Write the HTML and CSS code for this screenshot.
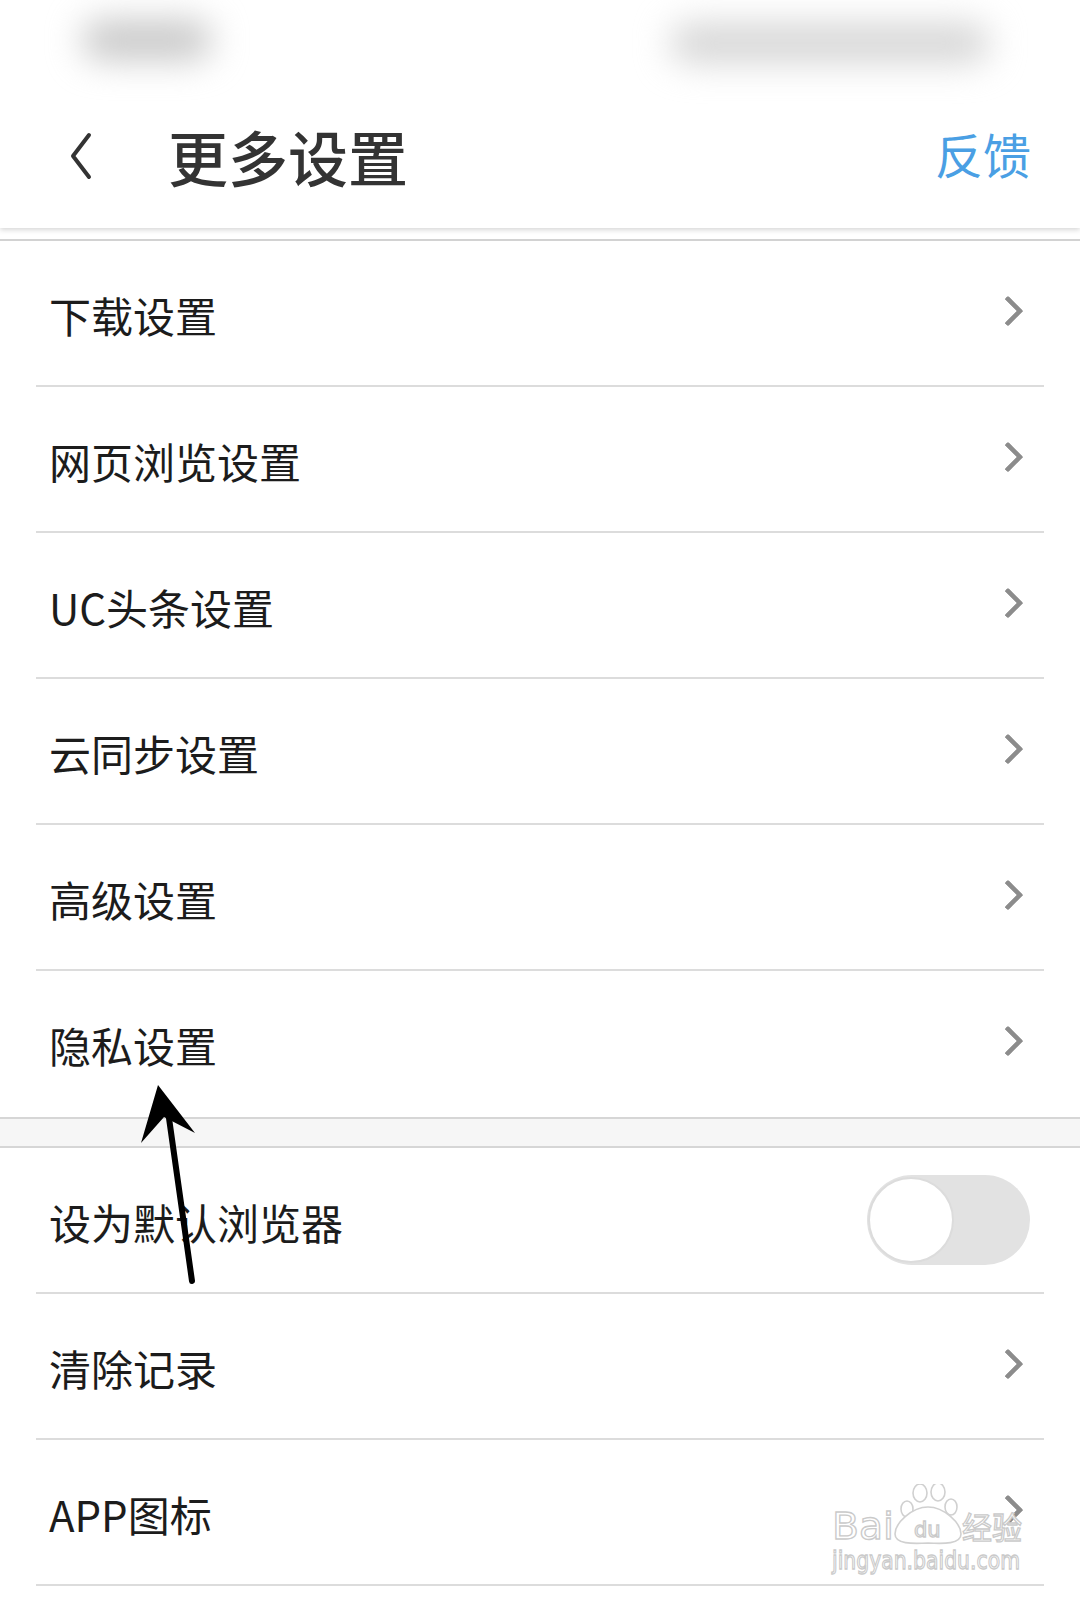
FILE: index.html
```html
<!DOCTYPE html>
<html>
  <head>
    <meta charset="UTF-8" />
    <link rel="stylesheet" href="styles.css">
  </head>

  <body>
    <div class="page">
      <header class="topbar">
        <div class="statusbar">
          <span class="blob blob-time"></span>
          <span class="blob blob-icons"></span>
        </div>
        <div class="navbar">
          <svg class="back" width="26" height="48" viewBox="0 0 26 48">
            <path d="M21 3 L5 24 L21 45" fill="none" stroke="#333" stroke-width="4" stroke-linecap="round" stroke-linejoin="round" />
          </svg>
          <span class="title">更多设置</span>
          <span class="feedback">反馈</span>
        </div>
      </header>

      <div class="gap-top"></div>

      <ul class="group">
        <li class="row"><span class="label">下载设置</span><span class="chev"></span></li>
        <li class="row"><span class="label">网页浏览设置</span><span class="chev"></span></li>
        <li class="row"><span class="label">UC头条设置</span><span class="chev"></span></li>
        <li class="row"><span class="label">云同步设置</span><span class="chev"></span></li>
        <li class="row"><span class="label">高级设置</span><span class="chev"></span></li>
        <li class="row"><span class="label">隐私设置</span><span class="chev"></span></li>
      </ul>

      <div class="gap-band"></div>

      <ul class="group">
        <li class="row">
          <span class="label">设为默认浏览器</span>
          <span class="toggle"><span class="knob"></span></span>
        </li>
        <li class="row"><span class="label">清除记录</span><span class="chev"></span></li>
        <li class="row"><span class="label">APP图标</span><span class="chev"></span></li>
      </ul>

      <!-- hand drawn arrow pointing at the privacy row -->
      <svg class="arrow" width="80" height="220" viewBox="0 0 80 220">
        <path d="M54 196 L30 26" stroke="#000" stroke-width="6" stroke-linecap="round" fill="none" />
        <path d="M20 0 L57 48 L26 32 L3 58 Z" fill="#000" />
      </svg>

      <svg class="watermark" width="210" height="110" viewBox="0 0 210 110">
        <g fill="#fff" stroke="#d0d0d0" stroke-width="1.6">
          <ellipse cx="79" cy="25" rx="6" ry="8" />
          <ellipse cx="92" cy="9" rx="7" ry="9" />
          <ellipse cx="110" cy="8" rx="7" ry="9" />
          <ellipse cx="123" cy="23" rx="6" ry="8" />
          <path d="M100 23 C84 23 67 39 67 50 C67 60 84 60 100 59 C116 60 133 60 133 50 C133 39 116 23 100 23 Z" />
        </g>
        <g class="wm-text" fill="#fff" stroke="#cacaca" stroke-width="1.3">
          <text x="4" y="55" font-size="38" textLength="62" lengthAdjust="spacingAndGlyphs">Bai</text>
          <text x="86" y="53" font-size="21">du</text>
          <text class="wm-cjk" x="134" y="55" font-size="31" textLength="60" lengthAdjust="spacingAndGlyphs">经验</text>
          <text x="4" y="85" font-size="25" textLength="188" lengthAdjust="spacingAndGlyphs">jingyan.baidu.com</text>
        </g>
      </svg>
    </div>
  </body>
</html>
```

FILE: styles.css
```css
html,
body {
  margin: 0;
  padding: 0;
  background: #fff;
}

body {
  font-family: "Noto Sans CJK SC", "Noto Sans", sans-serif;
  color: #1c1c1c;
}

.page {
  position: relative;
  width: 1080px;
  height: 1600px;
  overflow: hidden;
}

.topbar {
  height: 228px;
  background: #fff;
  box-shadow: 0 2px 5px rgba(0, 0, 0, 0.16);
  position: relative;
  z-index: 2;
}

.statusbar {
  height: 90px;
  display: flex;
  justify-content: space-between;
  align-items: center;
  padding: 0 90px 0 82px;
}

.blob {
  display: block;
  height: 40px;
  border-radius: 20px;
  background: #c8c8c8;
  filter: blur(17px);
}

.blob-time {
  width: 130px;
  margin-top: -10px;
}

.blob-icons {
  width: 320px;
  margin-top: -4px;
  background: #d6d6d6;
}

.navbar {
  height: 138px;
  display: flex;
  align-items: center;
  padding: 0 49px 10px 68px;
  box-sizing: border-box;
}

.back {
  display: block;
  margin-right: 74px;
  margin-top: 4px;
}

.title {
  font-size: 60px;
  font-weight: 500;
  color: #333;
  margin-top: 2px;
}

.feedback {
  margin-left: auto;
  font-size: 48px;
  color: #4a9fe4;
  margin-top: -2px;
}

.gap-top {
  height: 11px;
  border-bottom: 2px solid #d2d2d2;
}

.group {
  list-style: none;
  margin: 0;
  padding: 0;
}

.row {
  height: 146px;
  box-sizing: border-box;
  margin: 0 36px 0 36px;
  padding: 0 19px 0 13px;
  border-bottom: 2px solid #dcdcdc;
  display: flex;
  align-items: center;
}

.group:first-of-type .row:last-child {
  border-bottom-color: transparent;
}

.label {
  font-size: 42px;
  color: #1c1c1c;
  margin-top: 2px;
}

.chev {
  margin-left: auto;
  width: 17px;
  height: 17px;
  border-top: 5px solid #8c8c8c;
  border-right: 5px solid #8c8c8c;
  border-radius: 2px;
  transform: rotate(45deg);
  margin-right: 6px;
  margin-top: -4px;
}

.gap-band {
  height: 27px;
  background: #f6f6f6;
  border-top: 2px solid #d6d6d6;
  border-bottom: 2px solid #d6d6d6;
}

.toggle {
  margin-left: auto;
  margin-right: -5px;
  width: 163px;
  height: 90px;
  border-radius: 45px;
  background: #e2e2e2;
  display: flex;
  align-items: center;
  padding-left: 1px;
  box-sizing: border-box;
}

.knob {
  width: 86px;
  height: 86px;
  border-radius: 50%;
  background: #fff;
  border: 2px solid #dcdcdc;
  box-sizing: border-box;
}

.arrow {
  position: absolute;
  left: 138px;
  top: 1085px;
}

.watermark {
  position: absolute;
  left: 828px;
  top: 1484px;
}

.wm-text {
  font-family: "DejaVu Sans", "Liberation Sans", sans-serif;
}

.wm-text .wm-cjk {
  font-family: "Noto Sans CJK SC", sans-serif;
}
```
